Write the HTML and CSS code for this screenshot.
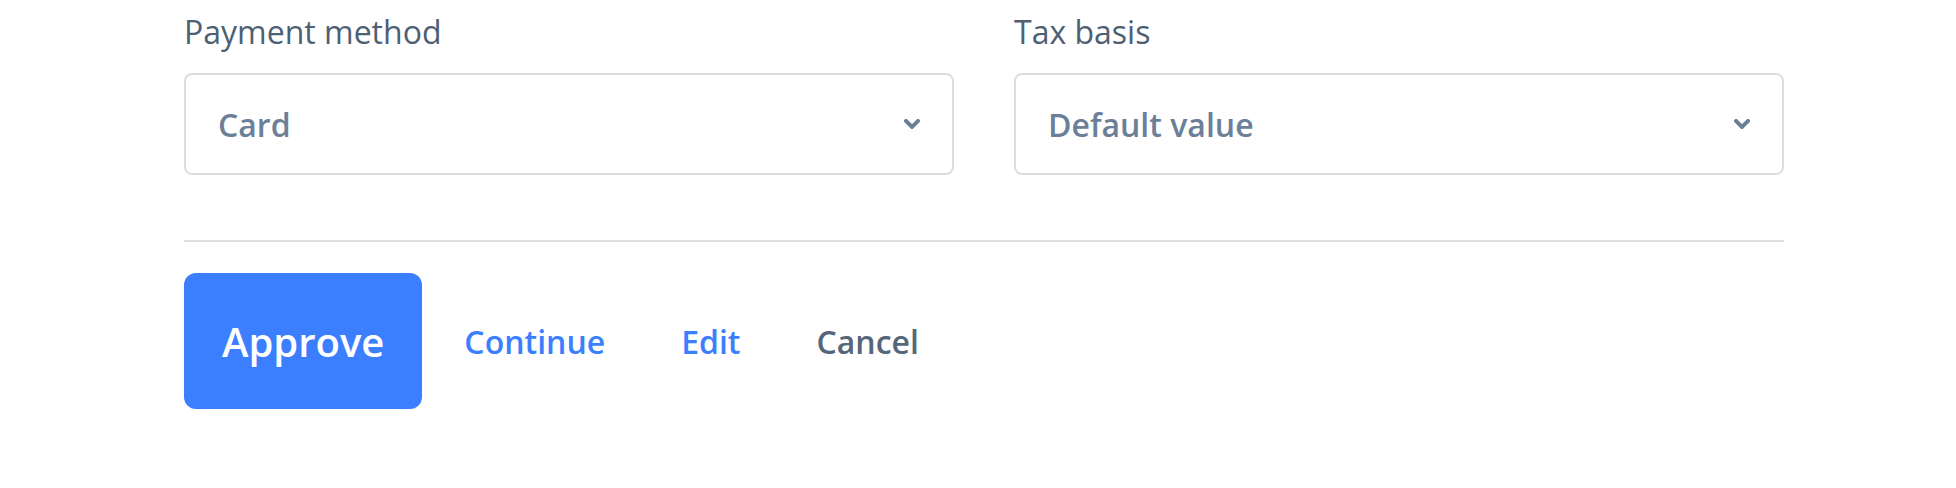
FILE: index.html
```html
<!DOCTYPE html>
<html lang="en">
<head>
<meta charset="utf-8">
<title>Payment form</title>
<link rel="stylesheet" href="styles.css">
</head>
<body>
<div class="page">
  <div class="fields">
    <div class="field">
      <label class="label">Payment method</label>
      <div class="select">
        <span class="select-value">Card</span>
        <svg class="chevron" width="16" height="10" viewBox="0 0 16 10"><path d="M2 2 L8 8 L14 2" fill="none" stroke="#6b7f99" stroke-width="4" stroke-linecap="square" stroke-linejoin="miter"/></svg>
      </div>
    </div>
    <div class="field">
      <label class="label">Tax basis</label>
      <div class="select">
        <span class="select-value">Default value</span>
        <svg class="chevron" width="16" height="10" viewBox="0 0 16 10"><path d="M2 2 L8 8 L14 2" fill="none" stroke="#6b7f99" stroke-width="4" stroke-linecap="square" stroke-linejoin="miter"/></svg>
      </div>
    </div>
  </div>
  <hr class="divider">
  <div class="actions">
    <button class="btn-primary">Approve</button>
    <a class="link link-blue">Continue</a>
    <a class="link link-blue">Edit</a>
    <a class="link link-gray">Cancel</a>
  </div>
</div>
</body>
</html>
```
FILE: styles.css
```css
* { box-sizing: border-box; }
body {
  margin: 0;
  background: #ffffff;
  font-family: "Open Sans", "Noto Sans", sans-serif;
}
.page {
  width: 1600px;
  margin-left: 184px;
  padding-top: 8px;
}
.fields {
  display: grid;
  grid-template-columns: 1fr 1fr;
  column-gap: 60px;
}
.field {
  display: flex;
  flex-direction: column;
}
.label {
  font-size: 32px;
  line-height: 48px;
  color: #4e5f74;
  margin-bottom: 17px;
}
.select {
  height: 102px;
  border: 2px solid #dddddd;
  border-radius: 8px;
  display: flex;
  align-items: center;
  justify-content: space-between;
  padding: 0 32px;
}
.select-value {
  font-size: 32px;
  font-weight: 600;
  color: #6b7f99;
}
.chevron { display: block; }
.divider {
  border: 0;
  height: 2px;
  background: #dedede;
  margin: 65px 0 31px;
}
.actions {
  display: flex;
  align-items: center;
}
.btn-primary {
  height: 136px;
  padding: 0 38px;
  border: 0;
  border-radius: 12px;
  background: #3b7fff;
  color: #ffffff;
  font-family: inherit;
  font-size: 40px;
  font-weight: 600;
}
.link {
  font-size: 32px;
  font-weight: 600;
  padding: 0 38px;
}
.link:first-of-type { margin-left: 4px; }
.link-blue { color: #3b7fff; }
.link-gray { color: #56667a; }
```
